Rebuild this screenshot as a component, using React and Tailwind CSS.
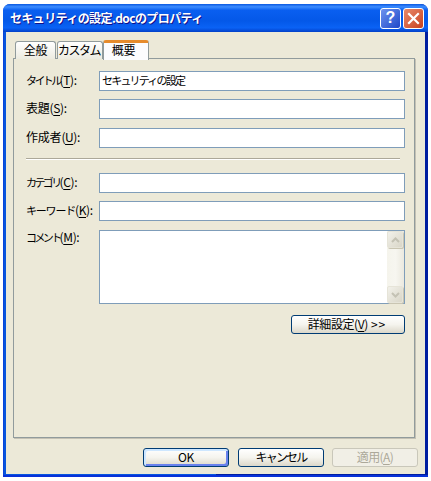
const jp = { fontFamily: '"Noto Sans CJK JP", "Noto Sans", sans-serif' };

function U({ children }) {
  return <span className="underline underline-offset-2">{children}</span>;
}

function Label({ text, k, kana, className = "" }) {
  return (
    <div className={`w-[73px] text-[12px] leading-[14px] text-black whitespace-nowrap ${className}`}>
      <span className={kana || "tracking-[-0.2px]"}>{text}</span>
      <span className="tracking-[-0.4px]">(<U>{k}</U>):</span>
    </div>
  );
}

function Row({ label, k, value, mt, kana }) {
  return (
    <div className={`flex items-center ${mt}`}>
      <Label text={label} k={k} kana={kana} className="-mt-[3px]" />
      <div className="w-[306px] h-[20px] bg-white border border-[#7f9db9] pl-[2px] text-[11px] leading-[17px] tracking-[-1.8px] text-black">
        {value}
      </div>
    </div>
  );
}

function XpButton({ children, className = "", isDefault }) {
  return (
    <div
      className={`flex items-center justify-center whitespace-nowrap border border-[#003c74] rounded-[3px] pb-[1px] bg-gradient-to-b from-white via-[#f5f4ee] to-[#dcd8ca] text-[12px] text-black tracking-[-0.3px] ${
        isDefault ? "shadow-[inset_2px_2px_0_#cee7ff,inset_-2px_-2px_0_#6982ee]" : ""
      } ${className}`}
    >
      {children}
    </div>
  );
}

function ScrollBtn({ dir }) {
  return (
    <div className="w-[16px] h-[17px] rounded-[2px] border border-[#e6e4d8] bg-gradient-to-br from-[#f2f1ea] to-[#d9d6c8] shadow-[1px_1px_0_#c9c5b2] flex items-center justify-center">
      <svg width="9" height="6" viewBox="0 0 9 6">
        <path
          d={dir === "up" ? "M1 5 L4.5 1.5 L8 5" : "M1 1 L4.5 4.5 L8 1"}
          fill="none"
          stroke="#c4c2b4"
          strokeWidth="2"
        />
      </svg>
    </div>
  );
}

function Tab({ children, className }) {
  return (
    <div className={`flex items-center justify-center whitespace-nowrap text-[12px] leading-[14px] text-black ${className}`}>
      {children}
    </div>
  );
}

export default function App() {
  return (
    <div className="w-[431px] h-[481px] bg-white pt-[4px] pl-[3px] overflow-hidden" style={jp}>
      <div className="w-[425px] h-[473px] rounded-t-[7px] bg-[linear-gradient(90deg,#0831d9_0,#0855dd_1px,#0855dd_50%,#001ea0_50%)] flex flex-col overflow-hidden shadow-[inset_0_-2px_0_#0831d9]">
        {/* title bar */}
        <div className="h-[28px] shrink-0 flex items-center pl-[7px] pr-[4px] bg-[linear-gradient(180deg,#0a58e0_0%,#3c8cff_10%,#0a5ff0_22%,#0458e8_60%,#0a62f5_85%,#0340c8_100%)]">
          <div className="flex-1 text-white font-bold text-[12px] leading-[16px] tracking-[-0.6px] [text-shadow:1px_1px_0_#0f1089] whitespace-nowrap">
            セキュリティの設定.docのプロパティ
          </div>
          <div className="flex gap-[2px]">
            <div className="w-[21px] h-[21px] rounded-[3px] border border-white bg-gradient-to-br from-[#6f93ee] to-[#1f45c8] flex items-center justify-center text-white font-bold text-[16px] leading-none" style={{ fontFamily: '"Liberation Sans", sans-serif' }}>
              ?
            </div>
            <div className="w-[21px] h-[21px] rounded-[3px] border border-white bg-gradient-to-br from-[#e8896a] to-[#c8401c] flex items-center justify-center">
              <svg width="13" height="13" viewBox="0 0 13 13">
                <path d="M2 2 L11 11 M11 2 L2 11" stroke="#fff" strokeWidth="2.2" strokeLinecap="square" />
              </svg>
            </div>
          </div>
        </div>

        {/* client */}
        <div className="mx-[3px] w-[419px] h-[442px] bg-[#ece9d8] pl-[7px] pt-[6px]">
          {/* tabs */}
          <div className="flex items-end h-[20px] pl-[2px] relative z-10">
            <Tab className="w-[41px] h-[18px] mb-[-1px] pb-[1px] bg-gradient-to-b from-white to-[#ecebe0] border border-b-0 border-[#919b9c] rounded-t-[3px] tracking-[-0.2px]">全般</Tab>
            <Tab className="w-[46px] h-[18px] mb-[-1px] ml-[1px] pb-[1px] pr-[2px] bg-gradient-to-b from-white to-[#ecebe0] border border-b-0 border-[#919b9c] rounded-t-[3px] text-[11px] tracking-[-1.5px]">カスタム</Tab>
            <Tab className="w-[46px] h-[20px] mb-[-2px] pb-[4px] pr-[5px] bg-[#fcfcfe] border-x border-[#919b9c] border-t-[3px] border-t-[#e68b2c] rounded-t-[3px] tracking-[-0.2px]">概要</Tab>
          </div>

          {/* panel */}
          <div className="w-[402px] h-[380px] border border-[#919b9c] shadow-[1px_1px_0_#c4c1b4] bg-[#ece9d8] pl-[12px] pt-[12px]">
            <Row label="タイトル" k="T" value="セキュリティの設定" kana="text-[11px] tracking-[-2.6px]" />
            <Row label="表題" k="S" mt="mt-[8px]" />
            <Row label="作成者" k="U" mt="mt-[9px]" />
            <div className="w-[374px] h-[2px] mt-[10px] bg-[#aca899] border-b border-white"></div>
            <Row label="カテゴリ" k="C" mt="mt-[13px]" kana="text-[11px] tracking-[-2.6px]" />
            <Row label="キーワード" k="K" mt="mt-[8px]" kana="text-[11px] tracking-[-1.2px]" />
            <div className="flex mt-[9px]">
              <Label text="コメント" k="M" kana="text-[11px] tracking-[-2.6px]" className="pt-[0px]" />
              <div className="w-[306px] h-[74px] bg-white border border-[#7f9db9] flex justify-end">
                <div className="w-[17px] h-full bg-gradient-to-r from-[#f5f4ec] via-[#f7f6f0] to-[#ebe9df] flex flex-col justify-between">
                  <ScrollBtn dir="up" />
                  <ScrollBtn dir="down" />
                </div>
              </div>
            </div>
            <div className="w-[379px] flex justify-end mt-[11px]">
              <XpButton className="w-[114px] h-[19px] pr-[2px]">
                <span className="tracking-[-0.4px]">詳細設定(<U>V</U>)</span>
                <span className="ml-[3px] tracking-[1px] text-[12px]">&gt;&gt;</span>
              </XpButton>
            </div>
          </div>

          {/* footer buttons */}
          <div className="flex mt-[10px] pl-[130px] gap-[9px]">
            <XpButton className="w-[86px] h-[19px]" isDefault>OK</XpButton>
            <XpButton className="w-[86px] h-[19px] text-[11px] tracking-[-1.8px]">キャンセル</XpButton>
            <div className="w-[86px] h-[19px] -ml-[1px] pb-[1px] flex items-center justify-center border border-[#c9c7ba] rounded-[3px] bg-[#f1efe6] text-[12px] text-[#aca899] tracking-[-0.6px]">
              適用(<U>A</U>)
            </div>
          </div>
        </div>
      </div>
    </div>
  );
}
